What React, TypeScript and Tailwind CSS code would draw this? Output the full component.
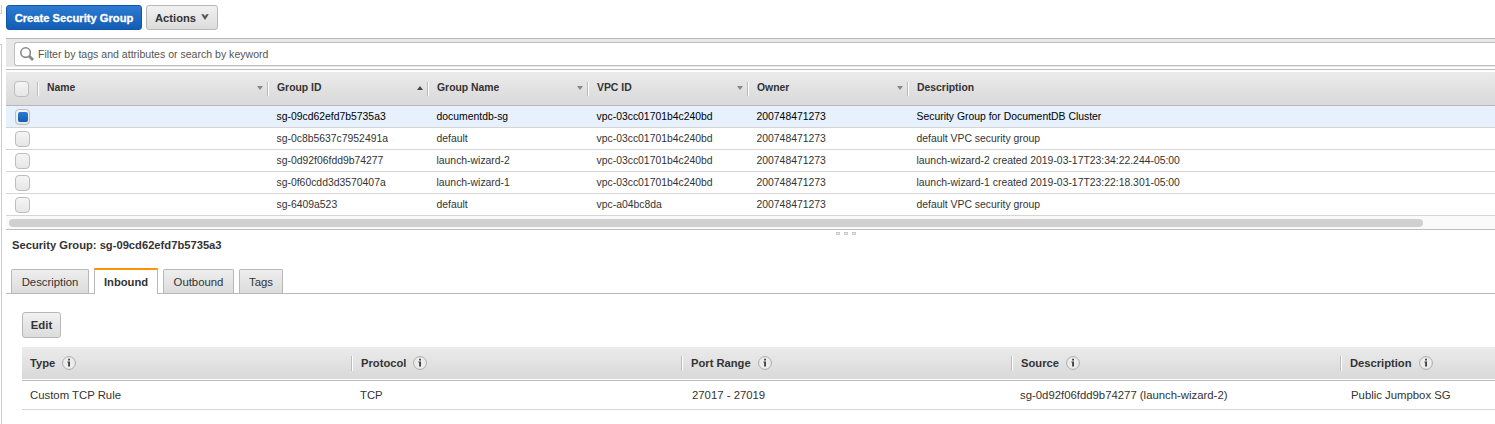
import React from "react";

const groups = [
  ["sg-09cd62efd7b5735a3", "documentdb-sg", "vpc-03cc01701b4c240bd", "Security Group for DocumentDB Cluster"],
  ["sg-0c8b5637c7952491a", "default", "vpc-03cc01701b4c240bd", "default VPC security group"],
  ["sg-0d92f06fdd9b74277", "launch-wizard-2", "vpc-03cc01701b4c240bd", "launch-wizard-2 created 2019-03-17T23:34:22.244-05:00"],
  ["sg-0f60cdd3d3570407a", "launch-wizard-1", "vpc-03cc01701b4c240bd", "launch-wizard-1 created 2019-03-17T23:22:18.301-05:00"],
  ["sg-6409a523", "default", "vpc-a04bc8da", "default VPC security group"],
];

const columns = [
  { label: "Name", width: "w-[230px]", sort: "down" },
  { label: "Group ID", width: "w-[160px]", sort: "up" },
  { label: "Group Name", width: "w-[160px]", sort: "down" },
  { label: "VPC ID", width: "w-[160px]", sort: "down" },
  { label: "Owner", width: "w-[160px]", sort: "down" },
  { label: "Description", width: "flex-1", sort: "" },
];

const ruleColumns = [
  { label: "Type", width: "w-[329px]", value: "Custom TCP Rule", pad: "pl-2" },
  { label: "Protocol", width: "w-[330px]", value: "TCP", pad: "pl-[9px]" },
  { label: "Port Range", width: "w-[330px]", value: "27017 - 27019", pad: "pl-[11px]" },
  { label: "Source", width: "w-[329px]", value: "sg-0d92f06fdd9b74277 (launch-wizard-2)", pad: "pl-[9px]" },
  { label: "Description", width: "flex-1", value: "Public Jumpbox SG", pad: "pl-[11px]" },
];

function Checkbox({ checked = false }: { checked?: boolean }) {
  return (
    <span className="flex h-4 w-[15px] shrink-0 items-center justify-center rounded-[4px] border border-[#bdbdbd] bg-gradient-to-b from-[#f5f5f5] to-[#e6e6e6]">
      {checked && <span className="h-[10px] w-[10px] rounded-[2px] bg-gradient-to-b from-[#2b7ad3] to-[#145cb3]" />}
    </span>
  );
}

function Divider({ tall = false }: { tall?: boolean }) {
  return <span className={`${tall ? "h-[15px]" : "h-[14px]"} w-[2px] shrink-0 border-l border-r border-l-[#bcbcbc] border-r-white`} />;
}

function Info() {
  return (
    <svg className="ml-[7px] shrink-0" width="14" height="14" viewBox="0 0 14 14">
      <circle cx="7" cy="7" r="6.4" fill="#ececec" stroke="#aaa" />
      <path d="M6.1 2.8h1.9v1.7H6.1zM5.4 5.4H8v5.2H6.1V6.5h-.7z" fill="#444" />
    </svg>
  );
}

function Tab({ label, width }: { label: string; width: string }) {
  return (
    <button className={`${width} h-6 rounded-t-[2px] border border-b-0 border-[#b8b8b8] bg-gradient-to-b from-[#eee] to-[#dcdcdc] text-center`}>
      {label}
    </button>
  );
}

export default function App() {
  return (
    <div className="flex h-[424px] w-full overflow-hidden bg-white font-['Liberation_Sans',Arial,sans-serif] text-[11.35px] leading-[14px] text-[#333]">
      <div className="flex w-[6px] shrink-0 flex-col">
        <div className="mt-[5px] h-[9px] w-[2px] border-b border-r border-[#ccc]" />
        <div className="mt-[30px] w-[2px] flex-1 border-r border-t border-[#ccc]" />
      </div>
      <div className="flex min-w-0 flex-1 flex-col">
        <div className="flex h-[38px] shrink-0 gap-1 pt-[5px] text-[11.2px]">
          <button className="h-[25px] w-[136px] rounded-[3px] border border-[#0f57ad] bg-gradient-to-b from-[#2c7bd2] to-[#145cb3] font-bold whitespace-nowrap text-white [-webkit-text-stroke:0.3px_white]">
            Create Security Group
          </button>
          <button className="flex h-[25px] w-[72px] items-center rounded-[3px] border border-[#b8b8b8] bg-gradient-to-b from-[#f1f1f1] to-[#dcdcdc] pl-2 font-bold">
            Actions
            <svg className="mb-px ml-[5px]" width="8" height="6" viewBox="0 0 8 6">
              <path d="M.2.3h2.5L4 2.3 5.3.3h2.5L4 6z" fill="#555" />
            </svg>
          </button>
        </div>

        <div className="flex h-[29px] shrink-0 border-t border-[#b9b9b9] bg-[#e8e8e8] pt-[3px] pl-2">
          <div className="flex h-6 flex-1 items-center rounded-l-[3px] border border-r-0 border-[#bfbfbf] bg-white pl-[5px] text-[10.55px] text-[#555]">
            <svg width="14" height="14" viewBox="0 0 14 14" fill="none" stroke="#888">
              <circle cx="5.6" cy="5.6" r="4.8" strokeWidth="1.6" />
              <path d="M9 9l4 4" strokeWidth="2.8" />
            </svg>
            <span className="ml-[4px] whitespace-nowrap">Filter by tags and attributes or search by keyword</span>
          </div>
        </div>
        <div className="mt-[2px] h-px shrink-0 bg-[#bdbdbd]" />

        <div className="mt-[2px] flex h-[34px] shrink-0 items-center border-b border-[#b8b8b8] bg-gradient-to-b from-[#ebebeb] to-[#d9d9d9] pl-2 text-[10.4px] font-bold">
          <Checkbox />
          <span className="w-2" />
          {columns.map((c) => (
            <div key={c.label} className={`${c.width} flex shrink-0 items-center`}>
              <Divider />
              <span className="ml-2 flex-1 pb-[2px] whitespace-nowrap">{c.label}</span>
              {c.sort && (
                <svg className="mr-1 mb-px" width="6" height="4" viewBox="0 0 6 4">
                  <path d={c.sort === "up" ? "M0 4h6L3 0z" : "M0 0h6L3 4z"} fill={c.sort === "up" ? "#444" : "#888"} />
                </svg>
              )}
            </div>
          ))}
        </div>

        {groups.map((g, i) => (
          <div key={g[0]} className={`flex h-[22px] shrink-0 items-center border-b border-[#d5d5d5] pl-[9px] text-[10.4px] whitespace-nowrap ${i === 0 ? "bg-[#e6f1fd] text-black" : ""}`}>
            <Checkbox checked={i === 0} />
            <span className="w-[246.5px]" />
            <span className="w-40">{g[0]}</span>
            <span className="w-40">{g[1]}</span>
            <span className="w-40">{g[2]}</span>
            <span className="w-40">200748471273</span>
            <span>{g[3]}</span>
          </div>
        ))}

        <div className="h-[14px] shrink-0 border-b border-[#bfbfbf] bg-[#fafafa] pt-[3px] pl-[3px]">
          <div className="h-2 w-[1414px] rounded-full bg-[#d0d0d0]" />
        </div>
        <div className="flex h-2 shrink-0 items-start gap-1 pt-[2px] pl-[830px]">
          {[0, 1, 2].map((n) => (
            <span key={n} className="h-[3px] w-1 border border-[#c8c8c8] bg-[#eee]" />
          ))}
        </div>

        <div className="h-[30px] shrink-0 pl-[6px] text-[11.2px] font-bold">Security Group: sg-09cd62efd7b5735a3</div>

        <div className="flex h-[26px] shrink-0">
          <span className="w-[5px] border-b border-[#b8b8b8]" />
          <div className="flex flex-1 items-end border-b border-[#b8b8b8]">
            <Tab label="Description" width="w-[78px]" />
            <button className="-mb-px ml-[5px] h-[26px] w-[64px] border-x border-t-2 border-x-[#b8b8b8] border-t-[#ff9400] bg-white text-[11.2px] font-bold">
              Inbound
            </button>
            <span className="w-[5px]" />
            <Tab label="Outbound" width="w-[71px]" />
            <span className="w-[5px]" />
            <Tab label="Tags" width="w-[44px]" />
          </div>
        </div>

        <div className="flex flex-col pt-[18px] pl-4">
          <button className="h-[26px] w-[39px] rounded-[3px] border border-[#b8b8b8] bg-gradient-to-b from-[#f1f1f1] to-[#dcdcdc] font-bold">
            Edit
          </button>
          <div className="mt-[9px] flex h-8 items-center bg-gradient-to-b from-[#ebebeb] to-[#d9d9d9] text-[11.2px] font-bold">
            {ruleColumns.map((c, i) => (
              <div key={c.label} className={`${c.width} flex shrink-0 items-center whitespace-nowrap`}>
                {i > 0 && <Divider tall />}
                <span className="ml-2">{c.label}</span>
                <Info />
              </div>
            ))}
          </div>
          <div className="mt-px flex h-[30px] items-center border-t border-b border-t-[#bdbdbd] border-b-[#d5d5d5]">
            {ruleColumns.map((c) => (
              <span key={c.label} className={`${c.width} ${c.pad} shrink-0 whitespace-nowrap`}>
                {c.value}
              </span>
            ))}
          </div>
        </div>
      </div>
    </div>
  );
}
